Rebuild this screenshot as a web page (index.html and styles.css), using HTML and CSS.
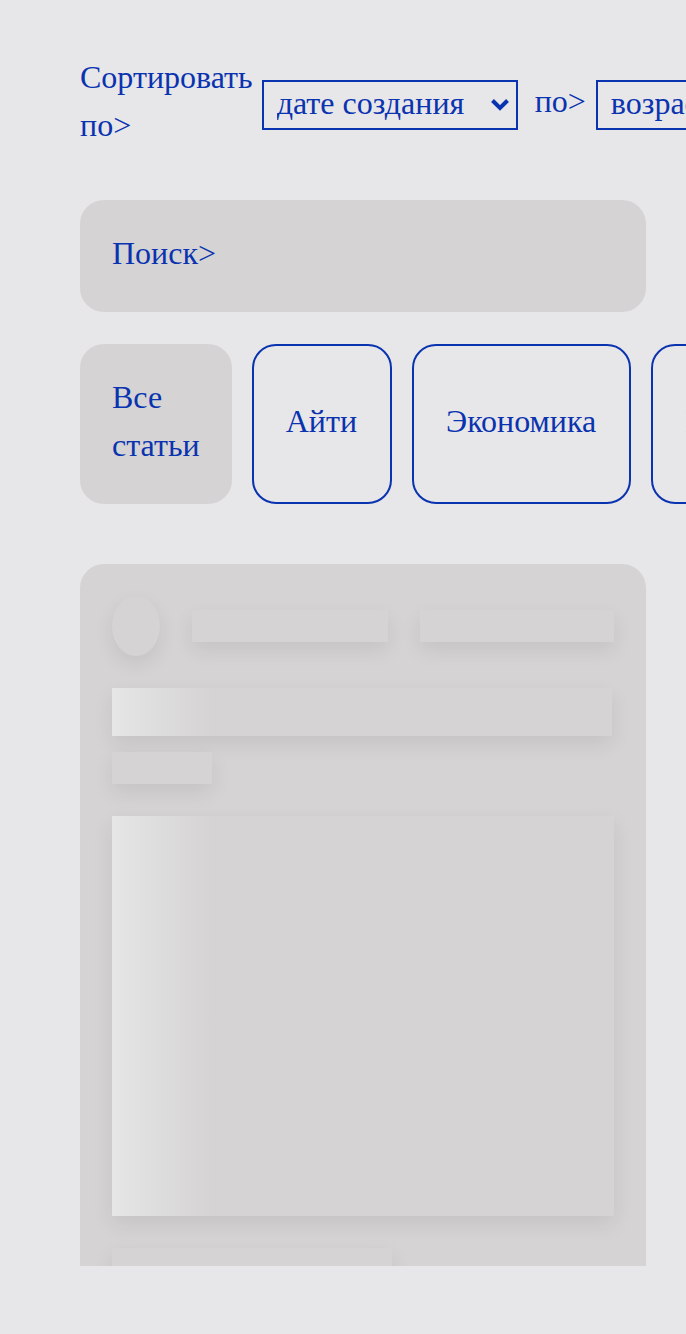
FILE: index.html
```html
<!DOCTYPE html>
<html>
	<head>
		<meta charset="UTF-8">
		<title>Статьи</title>
		<link rel="stylesheet" href="styles.css">
	</head>
	<body>
		<div class="page">
			<div class="sort">
				<label class="sort_label">Сортировать по&gt;</label>
				<div class="select_box first">
					<select class="sort_select">
						<option>дате создания</option>
						<option>названию</option>
					</select>
					<svg class="arrow" width="20" height="14" viewBox="0 0 20 14">
						<path d="M2.5 2.5 L10 10 L17.5 2.5" fill="none" stroke="#0a33b0" stroke-width="4"/>
					</svg>
				</div>
				<label class="sort_label">по&gt;</label>
				<div class="select_box">
					<select class="sort_select">
						<option>возрастанию</option>
						<option>убыванию</option>
					</select>
					<svg class="arrow" width="20" height="14" viewBox="0 0 20 14">
						<path d="M2.5 2.5 L10 10 L17.5 2.5" fill="none" stroke="#0a33b0" stroke-width="4"/>
					</svg>
				</div>
			</div>

			<div class="search">Поиск&gt;</div>

			<div class="tags">
				<span class="tag active">Все статьи</span>
				<span class="tag">Айти</span>
				<span class="tag">Экономика</span>
				<span class="tag">Политика</span>
			</div>

			<div class="list">
				<div class="card">
					<div class="card_head">
						<div class="sk avatar"></div>
						<div class="sk line author"></div>
						<div class="sk line date"></div>
					</div>
					<div class="sk title"></div>
					<div class="sk tagline"></div>
					<div class="sk picture"></div>
					<div class="sk line footer"></div>
				</div>
			</div>
		</div>
	</body>
</html>
```

FILE: styles.css
```css
body{
	margin: 0;
	padding: 0;
	background-color: #e7e6e8;
	font-family: "Liberation Serif", "Times New Roman", serif;
	font-size: 32px;
	line-height: 48px;
	color: #0a33b0;
	overflow: hidden;
}

.page{
	width: 566px;
	padding: 53px 0 0 80px;
}

.sort{
	display: flex;
	align-items: center;
	gap: 10px;
}
.sort_label{
	flex-shrink: 1;
}
.select_box + .sort_label{
	margin-left: 7px;
}
.select_box{
	position: relative;
	flex-shrink: 0;
	margin-top: 7px;
}
.select_box.first{
	margin-left: -1px;
}
.sort_select{
	display: block;
	height: 50px;
	padding: 0 52px 4px 13px;
	border: 2px solid #0a33b0;
	border-radius: 0;
	background-color: transparent;
	color: #0a33b0;
	font-family: "Liberation Serif", "Times New Roman", serif;
	font-size: 32px;
	-webkit-appearance: none;
	appearance: none;
}
.first .sort_select{
	width: 256px;
}
.arrow{
	position: absolute;
	right: 8px;
	top: 18px;
	pointer-events: none;
}

.search{
	margin-top: 51px;
	padding: 29px 32px 35px;
	background-color: #d5d3d4;
	border-radius: 24px;
}

.tags{
	display: flex;
	gap: 20px;
	margin-top: 32px;
	height: 160px;
}
.tag{
	display: flex;
	align-items: center;
	padding: 0 33px 6px 32px;
	border: 2px solid #0a33b0;
	border-radius: 24px;
}
.tag.active{
	border-color: transparent;
	background-color: #d5d3d4;
	padding: 0 30px 6px;
}

.list{
	margin-top: 60px;
	height: 702px;
	overflow: hidden;
}
.card{
	height: 900px;
	padding: 32px;
	background-color: #d5d3d4;
	border-radius: 24px;
}
.card_head{
	display: flex;
	align-items: center;
	gap: 32px;
}
.sk{
	background-color: #d5d3d4;
	box-shadow: 0 8px 20px rgba(0,0,0,0.08);
}
.avatar{
	width: 48px;
	height: 60px;
	border-radius: 50%;
}
.line{
	height: 32px;
}
.author{
	width: 196px;
}
.date{
	width: 194px;
}
.title{
	margin-top: 32px;
	width: 500px;
	height: 48px;
	background: linear-gradient(to right, #e6e6e6 0, #d5d3d4 100px);
}
.tagline{
	margin-top: 16px;
	width: 100px;
	height: 32px;
}
.picture{
	margin-top: 32px;
	width: 502px;
	height: 400px;
	background: linear-gradient(to right, #e6e6e6 0, #d5d3d4 100px);
}
.footer{
	margin-top: 32px;
	width: 280px;
}
```
